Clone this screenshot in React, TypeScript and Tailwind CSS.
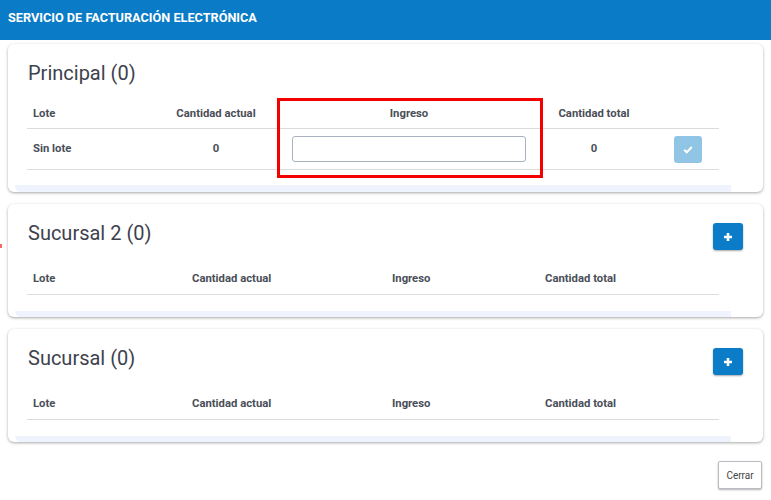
import React from "react";

const font = { fontFamily: "Roboto, 'Liberation Sans', sans-serif" };

function PlusIcon() {
  return (
    <svg width="10" height="10" viewBox="0 0 10 10">
      <path d="M5 1v8M1 5h8" stroke="white" strokeWidth="2.6" strokeLinecap="butt" />
    </svg>
  );
}

function CheckIcon() {
  return (
    <svg width="10" height="9" viewBox="0 0 10 9">
      <path d="M1.2 4.8l2.6 2.5L8.8 2" stroke="white" strokeWidth="2" fill="none" />
    </svg>
  );
}

function EmptyCard({ title }: { title: string }) {
  return (
    <div className="relative bg-white rounded-[6px] shadow-[0_1px_3px_rgba(0,0,0,0.35)] mx-[8px] flex flex-col">
      <div className="flex items-start justify-between pl-[20px] pr-[20px] pt-[17px] h-[66px]">
        <div className="text-[20px] text-[#3d424d] leading-[24px]">{title}</div>
        <button className="w-[30px] h-[27px] mt-[2px] rounded-[3px] bg-[#0b7cc7] shadow-[0_1px_2px_rgba(0,0,0,0.35)] flex items-center justify-center">
          <PlusIcon />
        </button>
      </div>
      <div className="mx-[19px] w-[692px] grid grid-cols-[165px_200px_153px_174px] h-[25px] pt-[1px] border-b border-[#dcdcdc] text-[11.3px] font-bold text-[#4a4e58] items-start">
        <div className="pl-[6px]">Lote</div>
        <div>Cantidad actual</div>
        <div>Ingreso</div>
        <div>Cantidad total</div>
      </div>
      <div className="h-[16px]" />
      <div className="ml-[7px] w-[716px] h-[6px] bg-[#eef3fd] rounded-bl-[6px]" />
    </div>
  );
}

export default function App() {
  return (
    <div className="w-[771px] h-[500px] bg-white relative overflow-hidden" style={font}>
      <div className="h-[40px] bg-[#0a7bc6] flex items-center pl-[8px] pb-[4px]">
        <span className="text-white font-bold text-[12.7px]">
          SERVICIO DE FACTURACIÓN ELECTRÓNICA
        </span>
      </div>

      <div className="flex flex-col gap-[12px] pt-[4px]">
        {/* Principal card */}
        <div className="relative bg-white rounded-[6px] shadow-[0_1px_3px_rgba(0,0,0,0.35)] mx-[8px] flex flex-col">
          <div className="pl-[20px] pt-[17px] h-[56px]">
            <div className="text-[20px] text-[#3d424d] leading-[24px]">Principal (0)</div>
          </div>
          <div className="mx-[19px] w-[692px] text-[11.3px] font-bold text-[#4a4e58]">
            <div className="grid grid-cols-[113px_152px_234px_136px_57px] h-[29px] pt-[1px] items-center border-b border-[#dcdcdc]">
              <div className="pl-[6px]">Lote</div>
              <div className="text-center">Cantidad actual</div>
              <div className="text-center">Ingreso</div>
              <div className="text-center">Cantidad total</div>
              <div />
            </div>
            <div className="grid grid-cols-[113px_152px_234px_136px_57px] h-[41px] items-center border-b border-[#dcdcdc]">
              <div className="pl-[6px]">Sin lote</div>
              <div className="text-center">0</div>
              <div>
                <input className="w-[234px] h-[26px] border border-[#a9b0bf] rounded-[3px] outline-none" />
              </div>
              <div className="text-center">0</div>
              <div className="pl-[12px]">
                <button className="w-[28px] h-[27px] rounded-[3px] bg-[#90c5e5] flex items-center justify-center">
                  <CheckIcon />
                </button>
              </div>
            </div>
          </div>
          <div className="h-[15px]" />
          <div className="ml-[7px] w-[716px] h-[7px] bg-[#eef3fd] rounded-bl-[6px]" />
          <div className="absolute left-[269px] top-[54px] w-[266px] h-[80px] border-[3px] border-[#f50000]" />
        </div>

        <EmptyCard title="Sucursal 2 (0)" />
        <EmptyCard title="Sucursal (0)" />
      </div>

      <div className="flex justify-end pr-[9px] pt-[19px]">
        <button className="w-[44px] h-[28px] bg-white border border-[#b9bcc2] rounded-[2px] shadow-[0_1px_2px_rgba(0,0,0,0.3)] text-[10px] text-[#444]">
          Cerrar
        </button>
      </div>

      <div className="absolute left-0 top-[244px] w-[2px] h-[4px] bg-[#f26b6b]" />
    </div>
  );
}
